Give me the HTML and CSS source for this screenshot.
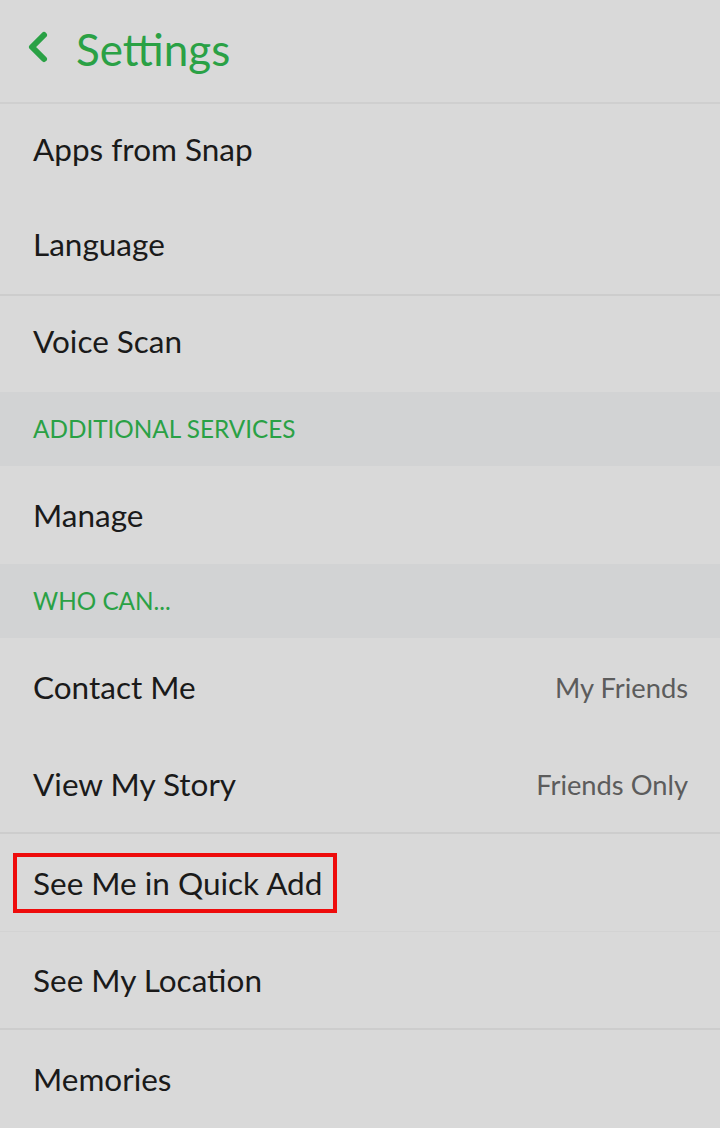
FILE: index.html
```html
<!DOCTYPE html>
<html lang="en">
<head>
  <meta charset="UTF-8">
  <meta name="viewport" content="width=device-width, initial-scale=1.0">
  <title>Settings</title>
  <link rel="stylesheet" href="styles.css">
</head>
<body>
  <div class="settings">
    <header class="topbar">
      <svg class="back" width="24" height="34" viewBox="0 0 24 34">
        <path d="M18 5 L6 17 L18 29" fill="none" stroke="#2aa145" stroke-width="6" stroke-linecap="round" stroke-linejoin="round"/>
      </svg>
      <h1>Settings</h1>
    </header>

    <div class="row short">Apps from Snap</div>
    <div class="row short line">Language</div>
    <div class="row short">Voice Scan</div>

    <div class="section">ADDITIONAL SERVICES</div>
    <div class="row">Manage</div>

    <div class="section">WHO CAN...</div>
    <div class="row">Contact Me <span class="value">My Friends</span></div>
    <div class="row line">View My Story <span class="value">Friends Only</span></div>
    <div class="row faint"><span class="marked">See Me in Quick Add</span></div>
    <div class="row line">See My Location</div>
    <div class="row">Memories</div>
  </div>
</body>
</html>
```

FILE: styles.css
```css
body {
  margin: 0;
  background: #d9d9d9;
  font-family: Lato, "Open Sans", sans-serif;
  color: #1a1a1a;
}
.settings {
  width: 720px;
}
.topbar {
  display: flex;
  align-items: center;
  height: 104px;
  padding-left: 26px;
  padding-bottom: 4px;
  border-bottom: 2px solid #cfcfcf;
  box-sizing: border-box;
}
.back {
  margin-right: 26px;
  margin-top: -4px;
}
h1 {
  margin: 0;
  font-size: 44px;
  font-weight: 400;
  color: #2aa145;
}
.row {
  display: flex;
  align-items: center;
  justify-content: space-between;
  height: 98px;
  padding: 0 32px 0 33px;
  font-size: 31.5px;
  box-sizing: border-box;
}
.short {
  height: 96px;
  padding-bottom: 6px;
}
.line {
  border-bottom: 2px solid #cdcdcd;
}
.faint {
  border-bottom: 1px solid #d3d3d3;
}
.value {
  color: #5c5c5c;
  font-size: 27.3px;
}
.section {
  display: flex;
  align-items: center;
  height: 74px;
  padding-left: 33px;
  padding-bottom: 2px;
  box-sizing: border-box;
  background: #d2d3d4;
  color: #2aa145;
  font-size: 24.3px;
}
.marked {
  display: inline-block;
  margin-left: -20px;
  padding: 10px 11px 10px 16px;
  line-height: 32px;
  border: 4px solid #ee0c0c;
}
```
